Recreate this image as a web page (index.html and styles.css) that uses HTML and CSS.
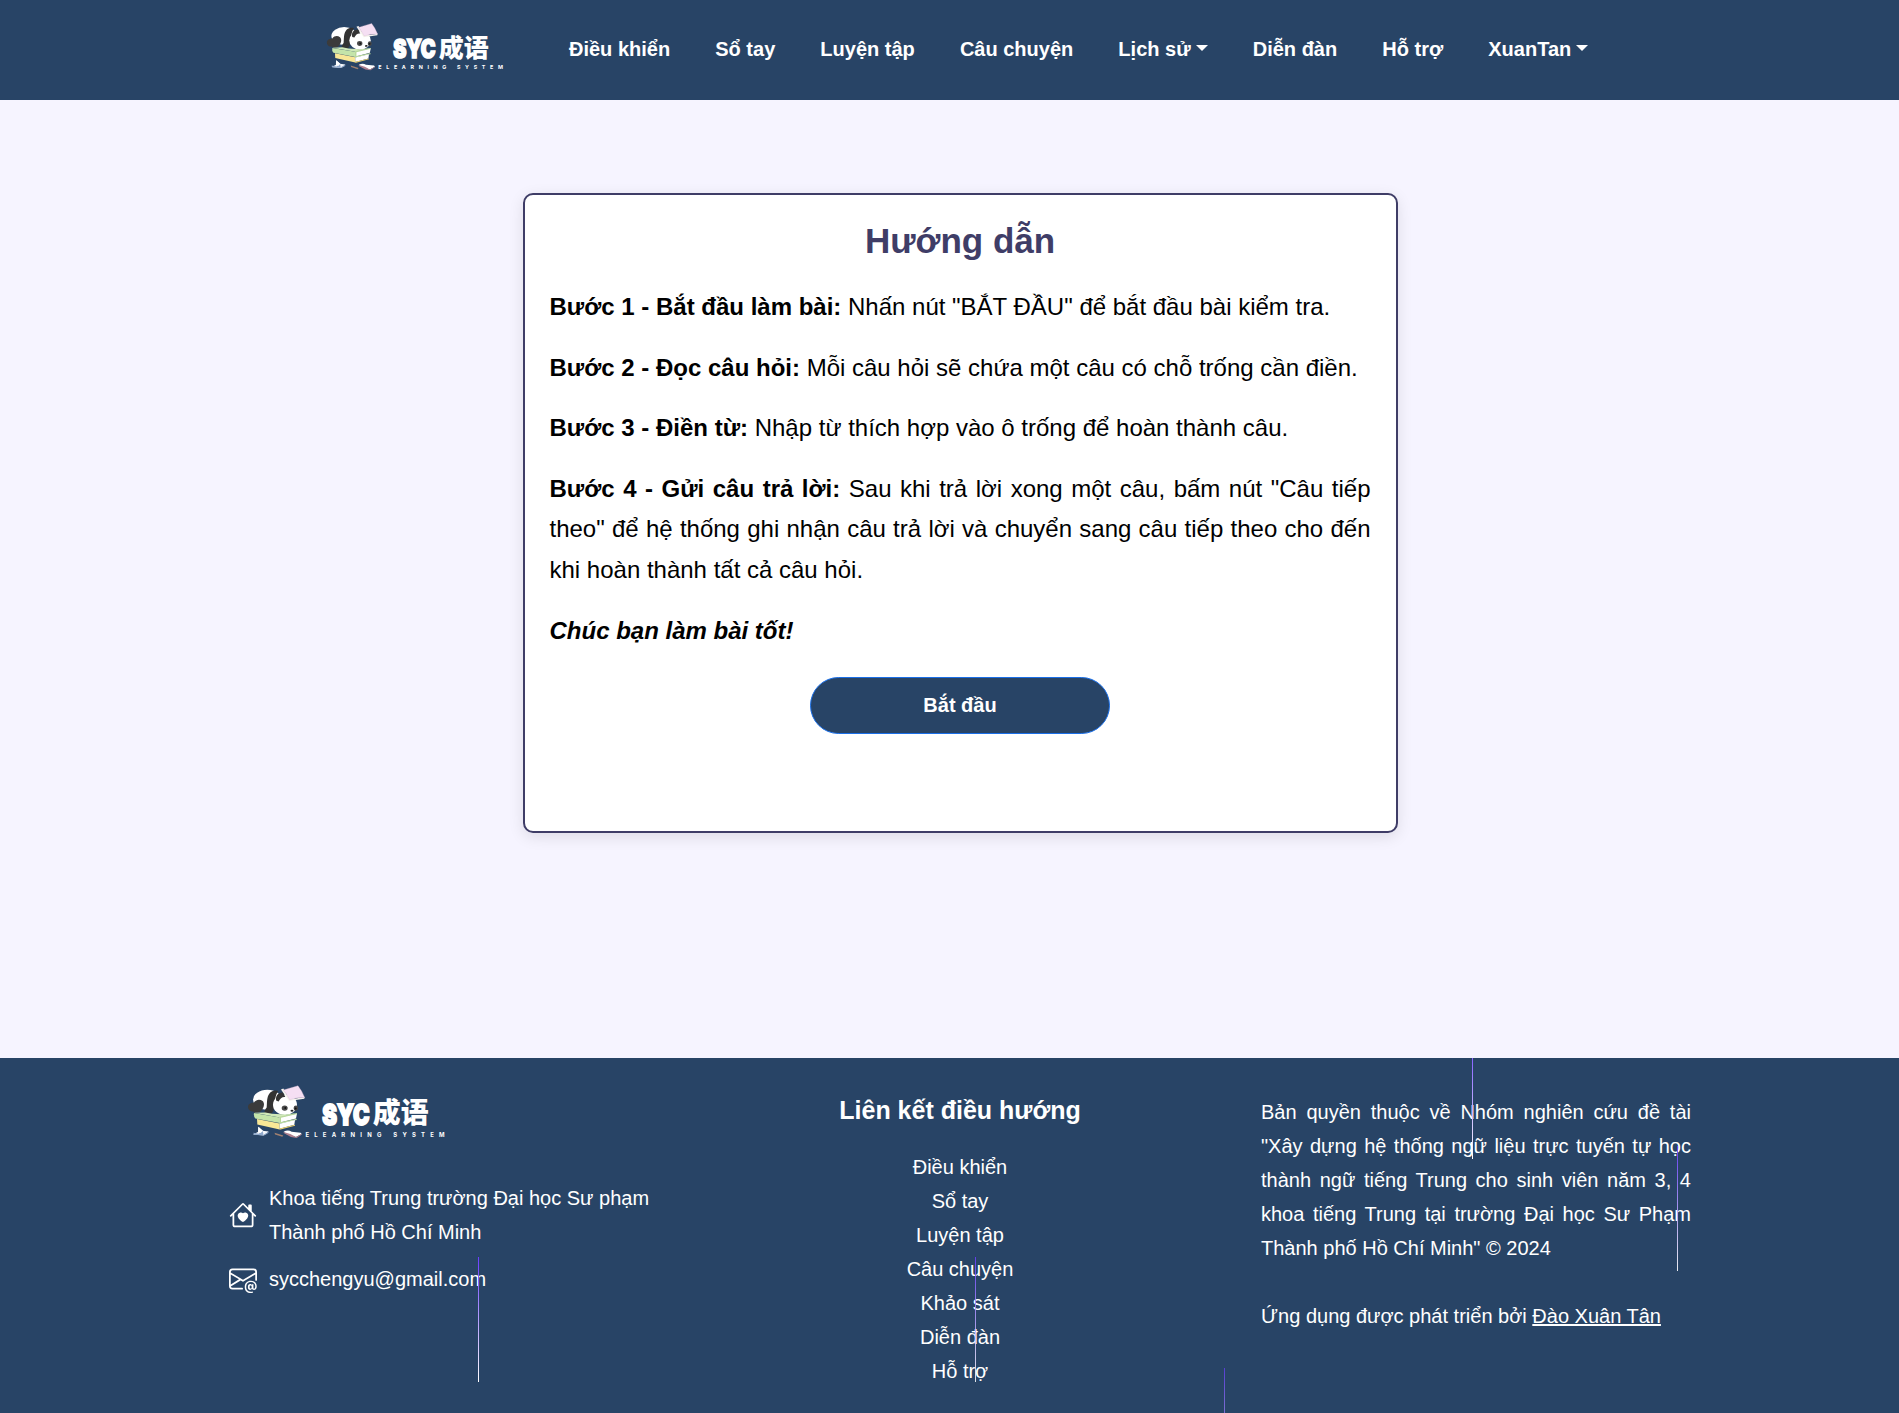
FILE: index.html
```html
<!DOCTYPE html>
<html lang="vi">
<head>
<meta charset="utf-8">
<title>SYC 成语 - Hướng dẫn</title>
<link rel="stylesheet" href="styles.css">
</head>
<body>
<svg width="0" height="0" class="defs" aria-hidden="true">
  <symbol id="panda" viewBox="9 6 178.7 167.5">
    <ellipse cx="70" cy="53" rx="43" ry="30" fill="#fff"/>
    <path d="M12 72c2-8 10-10 18-11 8-10 18-10 26-4 8 9 3 22-7 32-8 4-17 4-22-1-10 1-16-7-15-16z" fill="#3b3b3b"/>
    <path d="M78 32c8-7 18-8 25-5-11 14-8 28-12 44-1 10-3 20-9 23H63c-3-6 0-12 5-18 2-16-1-31 10-44z" fill="#333"/>
    <ellipse cx="123" cy="68" rx="36" ry="31" fill="#fff"/>
    <path d="M97 56c-4-14 5-26 20-25l7 14c-8-2-16 4-20 13z" fill="#333"/>
    <ellipse cx="122" cy="78" rx="9" ry="8" fill="#484848"/>
    <path d="M151 72c5-4 11-1 11 5 1 7-4 10-9 9-5-3-5-9-2-14z" fill="#484848"/>
    <circle cx="124" cy="78" r="3" fill="#111"/><circle cx="155" cy="79" r="3" fill="#111"/>
    <ellipse cx="144" cy="86" rx="4.500" ry="3" fill="#222"/>
    <path d="M111 22l7-3 19 33 45-7-1 5-46 7z" fill="#f7f5ee"/>
    <path d="M118 24l44-13q12 15 20 35-26 0-45 7-8-16-19-29z" fill="#f5dff3" stroke="#ccb1c9"/>
    <path d="M30 92l34-1 20 4 40 2 36-4-53 13z" fill="#d0e9b8"/>
    <path d="M30 93l77 13v17L34 109q-6-7-4-16z" fill="#c4e4a9"/>
    <path d="M106 106l53-12-3 15-50 13z" fill="#fff"/><path d="M159 93v3l-48 11v13l47-10v4l-52 12v-22z" fill="#b9d99c"/>
    <path d="M39 111l68 13v18L40 127z" fill="#f8e796"/>
    <path d="M107 125l46-11-2 14-44 12z" fill="#fff"/><path d="M107 139l46-11v3l-46 12z" fill="#ead06e"/>
    <path d="M43 134l13 12 18 2-15 12-32-3 16-8z" fill="#f5f8fc"/><path d="M28 152l16 3 12-9 3 14-29-2zM60 157l14-8-1 4-12 7z" fill="#91aacd"/><path d="M43 134l14 12-7 7-8-4z" fill="#fff"/>
    <path d="M92 152l26 8-3 4-22-7z" fill="#a08070"/>
    <path d="M119 149q13-7 24 0l27 3 3 4-17 9-25-7z" fill="#fff"/><path d="M119 150l20 6 17 9 17-10v3l-15 10-17-3-22-12z" fill="#ad7f8d"/>
  </symbol>
</svg>
<div class="page">
  <header class="header">
    <a class="header-logo"><svg class="logo" viewBox="0 0 540 150">
      <use href="#panda" width="160" height="150"/>
      <text class="logo-syc" x="202" y="109" textLength="127" lengthAdjust="spacingAndGlyphs">SYC</text>
      <text class="logo-han" x="338" y="104" textLength="150" lengthAdjust="spacingAndGlyphs">成语</text>
      <text class="logo-sub" x="157" y="142" textLength="374">ELEARNING SYSTEM</text>
    </svg></a>
    <nav class="nav">
      <a>Điều khiển</a><a>Sổ tay</a><a>Luyện tập</a><a>Câu chuyện</a><a class="caret">Lịch sử</a><a>Diễn đàn</a><a>Hỗ trợ</a><a class="caret">XuanTan</a>
    </nav>
  </header>
  <main class="main">
    <section class="card">
      <h1>Hướng dẫn</h1>
      <p><b>Bước 1 - Bắt đầu làm bài:</b> Nhấn nút "BẮT ĐẦU" để bắt đầu bài kiểm tra.</p>
      <p><b>Bước 2 - Đọc câu hỏi:</b> Mỗi câu hỏi sẽ chứa một câu có chỗ trống cần điền.</p>
      <p><b>Bước 3 - Điền từ:</b> Nhập từ thích hợp vào ô trống để hoàn thành câu.</p>
      <p><b>Bước 4 - Gửi câu trả lời:</b> Sau khi trả lời xong một câu, bấm nút "Câu tiếp theo" để hệ thống ghi nhận câu trả lời và chuyển sang câu tiếp theo cho đến khi hoàn thành tất cả câu hỏi.</p>
      <p><b><i>Chúc bạn làm bài tốt!</i></b></p>
      <button class="start">Bắt đầu</button>
    </section>
  </main>
  <footer class="footer">
    <div class="col">
      <svg class="logo logo-footer" viewBox="0 0 540 150">
        <use href="#panda" width="160" height="150"/>
        <text class="logo-syc" x="202" y="109" textLength="127" lengthAdjust="spacingAndGlyphs">SYC</text>
        <text class="logo-han" x="338" y="104" textLength="150" lengthAdjust="spacingAndGlyphs">成语</text>
        <text class="logo-sub" x="157" y="142" textLength="374">ELEARNING SYSTEM</text>
      </svg>
      <div class="contact">
        <svg class="icon" viewBox="0 0 16 16"><path d="M8 6.982C9.664 5.309 13.825 8.236 8 12 2.175 8.236 6.336 5.309 8 6.982"/><path d="M8.707 1.5a1 1 0 0 0-1.414 0L.646 8.146a.5.5 0 0 0 .708.707L2 8.207V13.5A1.5 1.5 0 0 0 3.5 15h9a1.5 1.5 0 0 0 1.5-1.5V8.207l.646.646a.5.5 0 0 0 .708-.707L13 5.793V2.5a.5.5 0 0 0-.5-.5h-1a.5.5 0 0 0-.5.5v1.293zM13 7.207V13.5a.5.5 0 0 1-.5.5h-9a.5.5 0 0 1-.5-.5V7.207l5-5z"/></svg>
        <span>Khoa tiếng Trung trường Đại học Sư phạm<br>Thành phố Hồ Chí Minh</span>
      </div>
      <div class="contact">
        <svg class="icon" viewBox="0 0 16 16"><path d="M2 2a2 2 0 0 0-2 2v8.01A2 2 0 0 0 2 14h5.5a.5.5 0 0 0 0-1H2a1 1 0 0 1-.966-.741l5.64-3.471L8 9.583l7-4.2V8.5a.5.5 0 0 0 1 0V4a2 2 0 0 0-2-2zm3.708 6.208L1 11.105V5.383zM1 4.217V4a1 1 0 0 1 1-1h12a1 1 0 0 1 1 1v.217l-7 4.2z"/><path d="M14.247 14.269c1.01 0 1.587-.857 1.587-2.025v-.21C15.834 10.43 14.64 9 12.52 9h-.035C10.42 9 9 10.36 9 12.432v.214C9 14.82 10.438 16 12.358 16h.044c.594 0 1.018-.074 1.237-.175v-.73c-.245.11-.673.18-1.18.18h-.044c-1.334 0-2.571-.788-2.571-2.655v-.157c0-1.657 1.058-2.724 2.64-2.724h.04c1.535 0 2.484 1.05 2.484 2.326v.118c0 .975-.324 1.39-.639 1.39-.232 0-.41-.148-.41-.42v-2.19h-.906v.569h-.03c-.084-.298-.368-.63-.954-.63-.778 0-1.259.555-1.259 1.4v.528c0 .892.49 1.434 1.26 1.434.471 0 .896-.227 1.014-.643h.043c.118.42.617.648 1.12.648m-2.453-1.588v-.227c0-.546.227-.791.573-.791.297 0 .572.192.572.708v.367c0 .573-.253.744-.564.744-.354 0-.581-.215-.581-.8Z"/></svg>
        <span>sycchengyu@gmail.com</span>
      </div>
    </div>
    <div class="col links">
      <h2>Liên kết điều hướng</h2>
      <a>Điều khiển</a><a>Sổ tay</a><a>Luyện tập</a><a>Câu chuyện</a><a>Khảo sát</a><a>Diễn đàn</a><a>Hỗ trợ</a>
    </div>
    <div class="col copyright">
      <p>Bản quyền thuộc về Nhóm nghiên cứu đề tài "Xây dựng hệ thống ngữ liệu trực tuyến tự học thành ngữ tiếng Trung cho sinh viên năm 3, 4 khoa tiếng Trung tại trường Đại học Sư Phạm Thành phố Hồ Chí Minh" © 2024</p>
      <p>Ứng dụng được phát triển bởi <a class="author">Đào Xuân Tân</a></p>
    </div>
    <i class="drop drop-1"></i><i class="drop drop-2"></i><i class="drop drop-3"></i><i class="drop drop-4"></i><i class="drop drop-5"></i>
  </footer>
</div>
</body>
</html>
```
FILE: styles.css
```css
* { box-sizing: border-box; }
html, body { margin: 0; height: 1413px; overflow: hidden; }
body { background: #f6f4ff; font: 20px/1.7 "Liberation Sans", Arial, sans-serif; color: #000; }
.defs { position: absolute; }
.page { width: 1920px; height: 1413px; display: flex; flex-direction: column; overflow: hidden; }
.header { height: 100px; flex: none; background: #284466; display: flex; padding-left: 326px; }
.header-logo { width: 243px; padding-top: 22px; flex: none; }
.logo { display: block; width: 180px; height: 50px; }
.logo text { fill: #fff; }
.logo-syc { font: 900 76px Inter, sans-serif; stroke: #fff; stroke-width: 5px; }
.logo-han { font: 900 76px "Noto Sans CJK SC", sans-serif; }
.logo-sub { font: 700 16px Inter, sans-serif; }
.nav { display: flex; gap: 45.1px; height: 97px; align-items: center; color: #fff; font-weight: 700; white-space: nowrap; }
.caret::after { content: ""; display: inline-block; margin-left: 5px; vertical-align: 5px; border: 6px solid transparent; border-top-color: #fff; border-bottom: 0; }
.main { height: 958px; flex: none; padding-top: 93px; }
.card { width: 875px; height: 640px; margin: 0 auto; padding: 25px; background: #fff; border: 2px solid #3f3d67; border-radius: 10px; box-shadow: 0 4px 15px rgba(0, 0, 0, .1); font-size: 24px; text-align: justify; }
.card h1 { margin: 0 0 25px; font-size: 35px; line-height: 42px; color: #3f3d67; text-align: center; }
.card p { margin: 0 0 20px; line-height: 40.6px; }
.start { display: block; width: 300px; height: 57px; margin: 26px auto 0; background: #284466; border: 1px solid #1a6fe8; border-radius: 30px; color: #fff; font: 700 20px "Liberation Sans", Arial, sans-serif; }
.footer { flex: 1; position: relative; overflow: hidden; background: #284466; color: #fff; display: flex; justify-content: space-between; padding: 0 229px; }
.col { width: 430px; }
.logo-footer { width: 201px; height: 56px; margin: 26px 0 41px 18px; }
.contact { display: flex; align-items: center; gap: 12px; margin-bottom: 13px; white-space: nowrap; }
.icon { width: 28px; height: 28px; fill: #fff; flex: none; }
.links { display: flex; flex-direction: column; align-items: center; }
.links h2 { margin: 34px 0 22px; font-size: 25px; line-height: 36px; }
.copyright { padding-top: 37px; text-align: justify; }
.copyright p { margin: 0 0 34px; }
.author { text-decoration: underline; }
.drop { position: absolute; width: 1px; height: 125px; background: linear-gradient(#6b3dff, #fff); }
.drop-1 { left: 478px; top: 199px; }
.drop-2 { left: 975px; top: 199px; opacity: .85; }
.drop-3 { left: 1472px; top: -24px; }
.drop-4 { left: 1677px; top: 88px; opacity: .9; }
.drop-5 { left: 1224px; top: 310px; opacity: .7; }
```
